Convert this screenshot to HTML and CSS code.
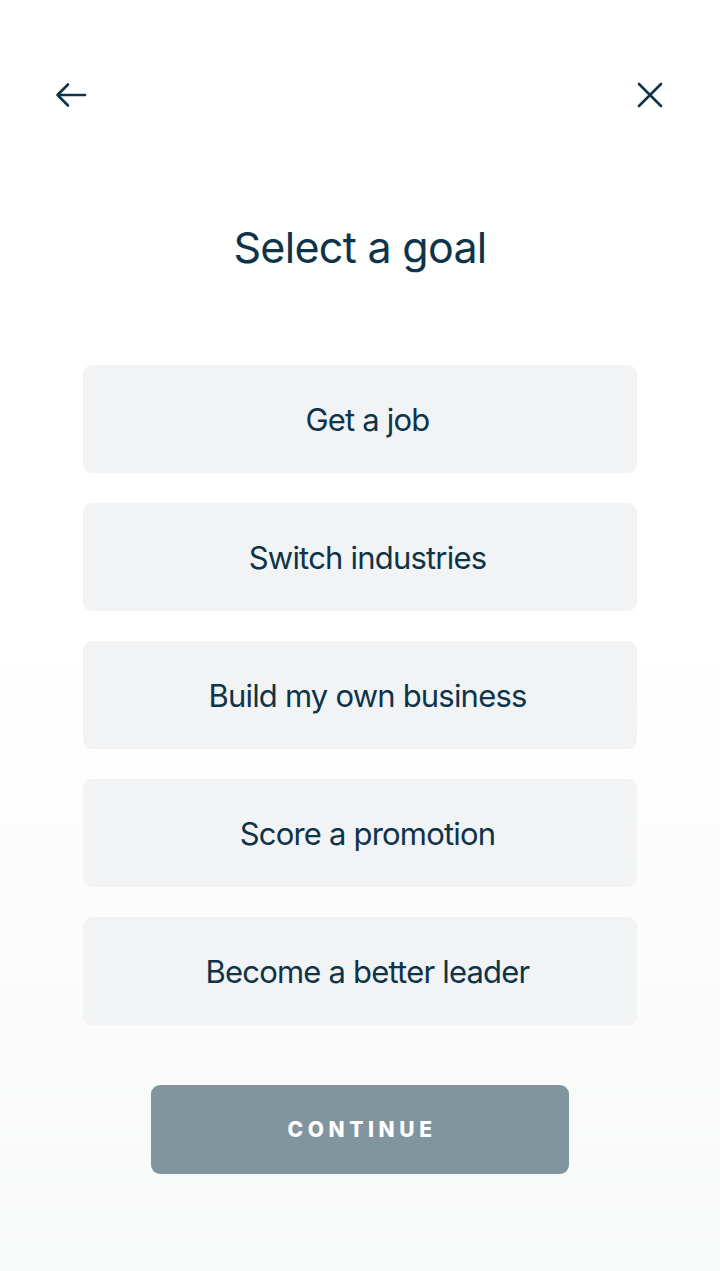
FILE: index.html
```html
<!DOCTYPE html>
<html lang="en">
<head>
  <meta charset="UTF-8">
  <meta name="viewport" content="width=device-width, initial-scale=1.0">
  <title>Select a goal</title>
  <link rel="stylesheet" href="styles.css">
</head>
<body>
  <div class="screen">
    <div class="topbar">
      <button class="icon-btn" aria-label="Back">
        <svg width="34" height="28" viewBox="0 0 34 28" fill="none" stroke="#0e3449" stroke-width="2.6" stroke-linecap="round" stroke-linejoin="round">
          <path d="M31 14H3.5M14 3.5L3.5 14L14 24.5"/>
        </svg>
      </button>
      <button class="icon-btn" aria-label="Close">
        <svg width="28" height="28" viewBox="0 0 28 28" fill="none" stroke="#0e3449" stroke-width="2.6" stroke-linecap="round">
          <path d="M3 3L25 25M25 3L3 25"/>
        </svg>
      </button>
    </div>

    <h1 class="title">Select a goal</h1>

    <div class="goals">
      <button class="goal">Get a job</button>
      <button class="goal">Switch industries</button>
      <button class="goal">Build my own business</button>
      <button class="goal">Score a promotion</button>
      <button class="goal">Become a better leader</button>
    </div>

    <button class="continue">CONTINUE</button>
  </div>
</body>
</html>
```

FILE: styles.css
```css
html, body {
  margin: 0;
  padding: 0;
}
body {
  font-family: Inter, "Noto Sans", sans-serif;
  color: #0e3449;
  background: linear-gradient(to bottom, #ffffff 0px, #ffffff 640px, #f7f8f8 1271px);
  min-height: 1271px;
}
.screen {
  display: flex;
  flex-direction: column;
  align-items: center;
}
.topbar {
  width: 100%;
  box-sizing: border-box;
  display: flex;
  justify-content: space-between;
  align-items: center;
  padding: 81px 56px 0 54px;
}
.icon-btn {
  background: none;
  border: none;
  padding: 0;
  display: flex;
  cursor: pointer;
}
.title {
  margin: 110px 0 0;
  font-size: 43px;
  font-weight: 400;
  letter-spacing: -0.7px;
  line-height: 56px;
  text-align: center;
}
.goals {
  margin-top: 90px;
  display: flex;
  flex-direction: column;
  gap: 30px;
}
.goal {
  width: 554px;
  height: 108px;
  background: #f1f3f5;
  border: none;
  border-radius: 9px;
  font-family: Inter, "Noto Sans", sans-serif;
  font-size: 31px;
  letter-spacing: -0.8px;
  color: #0e3449;
  padding: 0 0 0 15px;
  cursor: pointer;
}
.continue {
  margin-top: 60px;
  width: 418px;
  height: 89px;
  background: #81959e;
  border: none;
  border-radius: 9px;
  color: #fff;
  font-family: Inter, "Noto Sans", sans-serif;
  font-size: 21px;
  font-weight: 800;
  letter-spacing: 4.6px;
  padding: 0 0 0 4px;
  cursor: pointer;
}
```
